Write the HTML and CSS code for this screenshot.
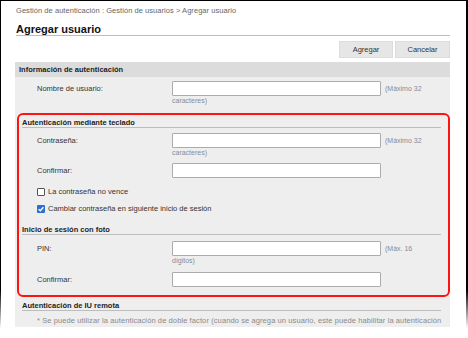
FILE: index.html
```html
<!DOCTYPE html>
<html lang="es">
<head>
<meta charset="utf-8">
<title>Agregar usuario</title>
<link rel="stylesheet" href="styles.css">
</head>
<body>
<div class="frame">
  <div class="page">
    <div class="crumb">Gestión de autenticación : Gestión de usuarios &gt; Agregar usuario</div>
    <h1 class="title">Agregar usuario</h1>
    <div class="actions">
      <button class="btn" type="button">Agregar</button>
      <button class="btn" type="button">Cancelar</button>
    </div>
    <div class="panel">
      <div class="sec-head">Información de autenticación</div>
      <div class="row row-first">
        <span class="label">Nombre de usuario:</span>
        <span class="input"></span>
        <span class="hint">(Máximo 32</span>
        <span class="hint-under">caracteres)</span>
      </div>

      <div class="highlight">
        <div class="sub-head">Autenticación mediante teclado</div>
        <div class="row row-pass">
          <span class="label">Contraseña:</span>
          <span class="input"></span>
          <span class="hint">(Máximo 32</span>
          <span class="hint-under">caracteres)</span>
        </div>
        <div class="row row-confirm">
          <span class="label">Confirmar:</span>
          <span class="input"></span>
        </div>
        <label class="check check-first"><span class="box"></span>La contraseña no vence</label>
        <label class="check check-second"><span class="box checked"><svg viewBox="0 0 8 8" width="8" height="8"><path d="M1.6 4.2 L3.3 5.8 L6.4 2.2" fill="none" stroke="#fff" stroke-width="1.4"/></svg></span>Cambiar contraseña en siguiente inicio de sesión</label>
        <div class="sub-head sub-head-photo">Inicio de sesión con foto</div>
        <div class="row row-pin">
          <span class="label">PIN:</span>
          <span class="input"></span>
          <span class="hint">(Máx. 16</span>
          <span class="hint-under">dígitos)</span>
        </div>
        <div class="row row-confirm2">
          <span class="label">Confirmar:</span>
          <span class="input"></span>
        </div>
      </div>

      <div class="sub-head sub-head-remote">Autenticación de IU remota</div>
      <p class="note">* Se puede utilizar la autenticación de doble factor (cuando se agrega un usuario, este puede habilitar la autenticación</p>
    </div>
  </div>
  <div class="fade fade-left"></div>
  <div class="fade fade-right"></div>
</div>
</body>
</html>
```

FILE: styles.css
```css
* { box-sizing: border-box; }

html, body {
  margin: 0;
  padding: 0;
  background: #fff;
}

body {
  font-family: "Liberation Sans", Arial, sans-serif;
  font-size: 7.5px;
  color: #333;
}

.frame {
  position: relative;
  width: 468px;
  height: 338px;
  border-top: 1px solid #000;
  border-left: 1px solid #000;
  border-right: 2px solid #000;
}

.page {
  height: 326px;
  overflow: hidden;
  padding: 0 16px 0 14px;
  background: #fff;
}

.crumb {
  margin: 5px 0 0 1px;
  height: 10px;
  line-height: 10px;
  color: #666;
  font-size: 7.5px;
  letter-spacing: 0.05px;
  white-space: nowrap;
}

.title {
  margin: 7px 0 0 1px;
  line-height: 12px;
  font-size: 11px;
  font-weight: bold;
  color: #111;
  border-bottom: 1px solid #bdbdbd;
  height: 13px;
}

.actions {
  display: flex;
  justify-content: flex-end;
  gap: 2px;
  margin-top: 5px;
  height: 17px;
}

.btn {
  font-family: inherit;
  font-size: 7.5px;
  color: #333;
  background: #e6e6e6;
  border: 1px solid #dcdcdc;
  border-radius: 0;
  padding: 0;
  height: 17px;
  width: 54px;
}

.btn + .btn { width: 55px; }

.panel {
  margin-top: 4px;
  background: #eeeeee;
  height: 300px;
}

.sec-head {
  height: 15px;
  line-height: 15px;
  padding-left: 4px;
  background: #dcdcdc;
  font-weight: bold;
  color: #222;
}

.row {
  display: grid;
  grid-template-columns: 22px 135px 209px auto;
  grid-template-rows: 15px auto;
  align-items: center;
}

.label {
  grid-column: 2;
  grid-row: 1;
  color: #333;
}

.input {
  grid-column: 3;
  grid-row: 1;
  height: 15px;
  background: #fff;
  border: 1px solid #ababab;
  border-radius: 1px;
}

.hint {
  grid-column: 4;
  grid-row: 1;
  padding-left: 4px;
  color: #868b9c;
  font-size: 7px;
  white-space: nowrap;
}

.hint-under {
  grid-column: 3;
  grid-row: 2;
  line-height: 8px;
  margin-top: 1px;
  color: #868b9c;
  font-size: 7px;
}

.row-first { margin-top: 4px; }

.highlight {
  margin: 8px 0 0 2px;
  border: 2px solid #ff1414;
  border-radius: 6px;
  height: 184px;
}

.highlight .row { grid-template-columns: 18px 135px 209px auto; }

.sub-head {
  margin: 0 7px 0 3px;
  padding-top: 4px;
  line-height: 8px;
  height: 13px;
  font-weight: bold;
  color: #222;
  border-bottom: 1px solid #bdbdbd;
}

.row-pass { margin-top: 5px; }
.row-confirm { margin-top: 6px; }

.check {
  display: flex;
  align-items: center;
  gap: 3px;
  margin-left: 18px;
  height: 9px;
  color: #333;
}

.check-first { margin-top: 9px; }
.check-second { margin-top: 8px; }

.box {
  display: inline-flex;
  width: 8px;
  height: 8px;
  border: 1px solid #555;
  border-radius: 1px;
  background: #fff;
}

.box.checked {
  border: none;
  background: #2b6fd3;
}

.sub-head-photo { margin-top: 9px; }
.row-pin { margin-top: 6px; }
.row-confirm2 { margin-top: 7px; }

.sub-head-remote {
  margin: 1px 9px 0 7px;
}

.note {
  margin: 5px 0 0 22px;
  color: #8a8a8a;
  white-space: nowrap;
  line-height: 9px;
  letter-spacing: 0.1px;
}

.fade {
  position: absolute;
  bottom: 0;
  height: 48px;
  background: linear-gradient(to bottom, rgba(255,255,255,0), #fff 80%);
}

.fade-left { left: -1px; width: 1px; }
.fade-right { right: -2px; width: 2px; }
```
